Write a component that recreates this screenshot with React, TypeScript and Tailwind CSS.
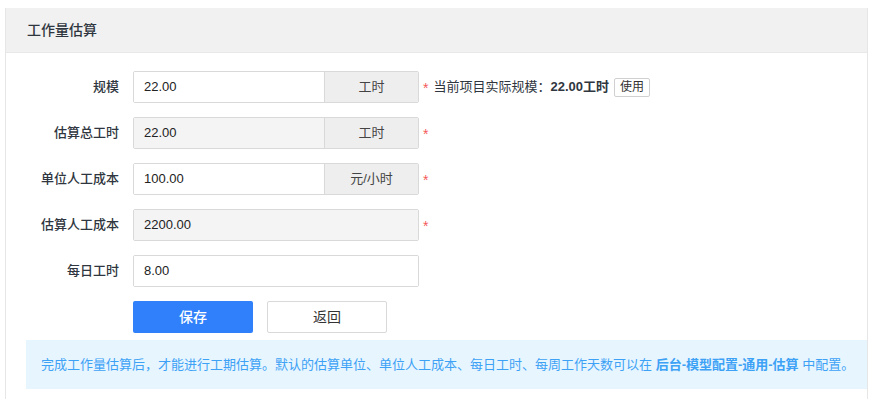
const font = "font-['Liberation_Sans','Noto_Sans_CJK_SC',sans-serif]";

type Row = {
  label: string;
  value: string;
  addon?: string;
  disabled?: boolean;
  required?: boolean;
  extra?: boolean;
};

const rows: Row[] = [
  { label: "规模", value: "22.00", addon: "工时", required: true, extra: true },
  { label: "估算总工时", value: "22.00", addon: "工时", disabled: true, required: true },
  { label: "单位人工成本", value: "100.00", addon: "元/小时", required: true },
  { label: "估算人工成本", value: "2200.00", disabled: true, required: true },
  { label: "每日工时", value: "8.00" },
];

const Field = ({ row }: { row: Row }) => (
  <div className="flex items-center h-[32px]">
    <div className="w-[113px] mr-[14px] text-right text-[13px] font-medium text-[#2f3640]">{row.label}</div>
    <div className="flex w-[286px] h-[32px] border border-[#d9d9d9] rounded-[2px] overflow-hidden">
      <div
        className={`flex-1 flex items-center px-[10px] text-[13px] text-[#222] ${
          row.disabled ? "bg-[#f4f4f4]" : "bg-white"
        }`}
      >
        {row.value}
      </div>
      {row.addon && (
        <div className="w-[94px] border-l border-[#d9d9d9] bg-[#eeeeee] flex items-center justify-center text-[13px] text-[#444]">
          {row.addon}
        </div>
      )}
    </div>
    {row.required && <span className="ml-[4px] text-[14px] text-[#f45a5a] leading-none mt-[2px]">*</span>}
    {row.extra && (
      <div className="ml-[5px] flex items-center text-[13px] text-[#2f3640]">
        当前项目实际规模：<span className="font-bold">22.00工时</span>
        <span className="ml-[5px] h-[19px] px-[5px] border border-[#d0d0d0] rounded-[2px] flex items-center text-[12px] text-[#333] bg-white">
          使用
        </span>
      </div>
    )}
  </div>
);

export default function App() {
  return (
    <div className={`${font} w-[869px] h-[399px] bg-white overflow-hidden pt-[8px] pl-[5px]`}>
      <div className="w-[863px] h-[391px] border-l border-r border-[#e6e6e6]">
        <div className="h-[45px] bg-[#f1f1f1] border-b border-[#e8e8e8] flex items-center pl-[21px] text-[14px] font-medium text-[#2f3640]">
          工作量估算
        </div>
        <div className="pt-[18px] flex flex-col gap-[14px]">
          {rows.map((r) => (
            <Field key={r.label} row={r} />
          ))}
          <div className="flex gap-[14px] pl-[127px]">
            <button className="w-[120px] h-[32px] rounded-[2px] bg-[#2f80fa] text-white text-[14px] font-medium">
              保存
            </button>
            <button className="w-[120px] h-[32px] rounded-[2px] border border-[#d9d9d9] bg-white text-[#333] text-[14px]">
              返回
            </button>
          </div>
        </div>
        <div className="mt-[7px] ml-[20px] h-[49px] bg-[#e7f5fe] flex items-center pl-[15px] text-[13px] text-[#3da2f5] whitespace-nowrap">
          完成工作量估算后，才能进行工期估算。默认的估算单位、单位人工成本、每日工时、每周工作天数可以在&nbsp;
          <span className="font-bold">后台-模型配置-通用-估算</span>&nbsp;中配置。
        </div>
      </div>
    </div>
  );
}
